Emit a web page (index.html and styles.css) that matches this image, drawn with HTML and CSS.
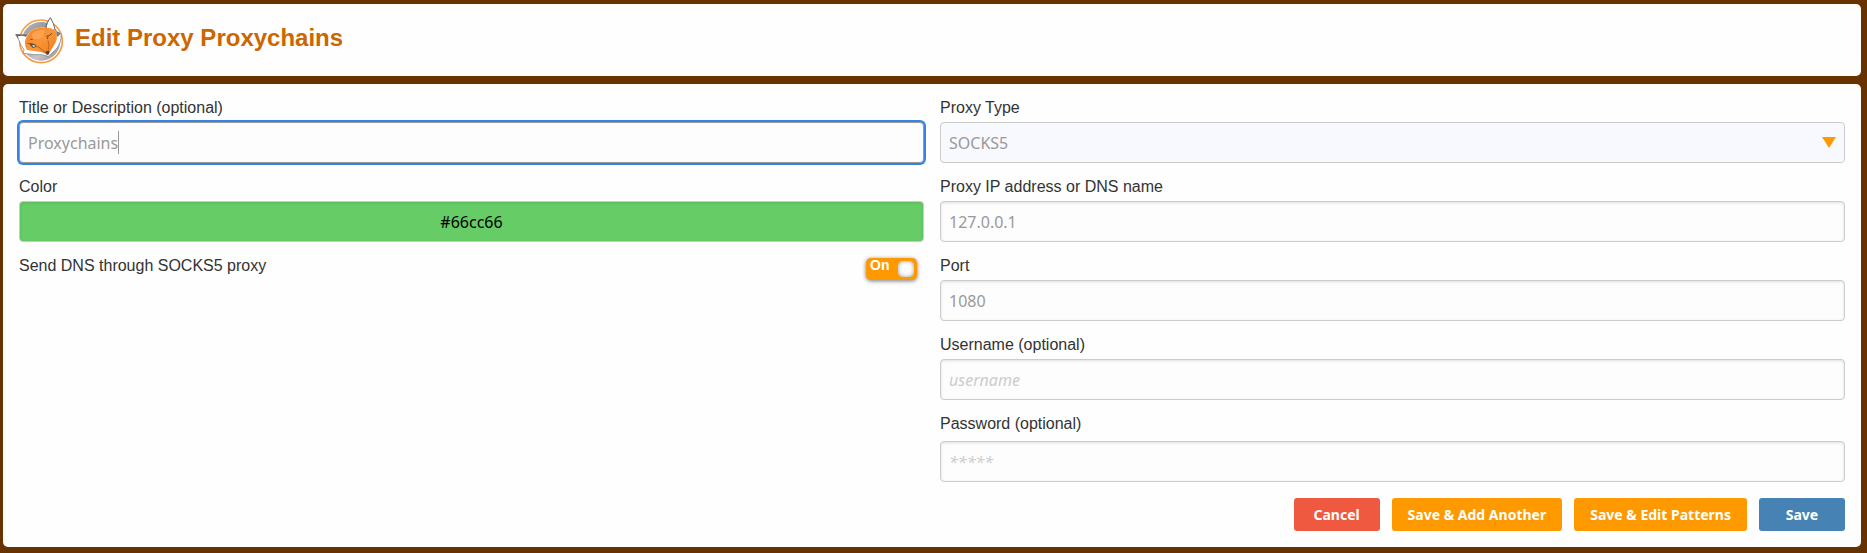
FILE: index.html
```html
<!DOCTYPE html>
<html lang="en">
<head>
<meta charset="utf-8">
<title>Edit Proxy Proxychains</title>
<link rel="stylesheet" href="styles.css">
</head>
<body>
<header class="card header">
  <svg class="logo" viewBox="12 12 150 150" aria-hidden="true">
    <defs>
      <linearGradient id="disc" x1="0" y1="0" x2="1" y2="1">
        <stop offset="0" stop-color="#b4b5b7"/><stop offset=".35" stop-color="#9b9c9f"/>
        <stop offset=".65" stop-color="#c5c6c8"/><stop offset="1" stop-color="#87888b"/>
      </linearGradient>
      <linearGradient id="fur" x1="0" y1="0" x2="1" y2="1">
        <stop offset="0" stop-color="#f58220"/><stop offset=".5" stop-color="#fa9537"/><stop offset="1" stop-color="#f07c1c"/>
      </linearGradient>
    </defs>
    <circle cx="93" cy="91" r="64" fill="#fff" stroke="#f99b45" stroke-width="5"/>
    <circle cx="93" cy="91" r="58" fill="url(#disc)"/>
    <path d="M17 71 L52 73 L62 60 Q82 47 107 50 Q110 33 121 20 Q132 36 136 59 L153 66 Q156 92 139 114 L115 136 Q94 128 74 131 L39 127 L42 116 Q31 102 28 90Z" fill="#fff"/>
    <path d="M17 71 L28 90 Q31 102 42 116 L39 127 L74 131 Q94 128 115 136 L139 114 Q156 92 153 66" fill="none" stroke="#77787b" stroke-width="2" stroke-linejoin="round"/>
    <path d="M16 69 L52 71 L48 77 Q34 72 24 76 L26 85Z" fill="#626366"/>
    <path d="M107 50 Q110 33 121 20 Q132 36 136 59" fill="none" stroke="#626366" stroke-width="3"/>
    <path d="M107 51 Q110 35 120 23 L112 38 L110 50Z" fill="#626366"/>
    <path d="M50 77 L62 60 Q84 47 110 50 Q128 51 138 59 Q146 83 131 104 L118 126 L109 130 Q95 121 78 121 L51 117 Q39 96 50 77Z" fill="url(#fur)"/>
    <path d="M65 70 Q79 55 104 57 L99 78 Q83 89 68 82Z" fill="#ffb066" opacity=".6"/>
    <path d="M138 60 L153 66 Q146 76 142 77Z" fill="#77787b"/>
    <path d="M51 97 Q66 96 73 101 Q90 109 109 127" fill="none" stroke="#8a4c20" stroke-width="2"/>
    <path d="M57 96 L76 100 L78 108 L68 111 L61 103Z" fill="#59504b"/>
    <path d="M67 102 L74 103 L74 107 L69 107Z" fill="#e6f0f4"/>
    <path d="M108 76 Q118 76 126 67 M114 77 L112 84 M61 85 L68 85" fill="none" stroke="#6b4a33" stroke-width="3"/>
    <path d="M114 88 Q119 103 114 121" fill="none" stroke="#a75b23" stroke-width="2"/>
    <path d="M107 121 L118 120 L117 130 L110 132Z" fill="#424245"/>
  </svg>
  <h1 class="title">Edit Proxy Proxychains</h1>
</header>

<form class="card panel">
  <div class="columns">
    <div class="column">
      <div class="field">
        <label class="label" for="title">Title or Description (optional)</label>
        <div class="editing">
          <input class="control active" id="title" type="text" value="Proxychains">
          <span class="caret"></span>
        </div>
      </div>
      <div class="field">
        <label class="label" for="color">Color</label>
        <input class="control color" id="color" type="text" value="#66cc66">
      </div>
      <div class="switch-row">
        <label class="label" for="dns">Send DNS through SOCKS5 proxy</label>
        <span class="switch">
          <input class="switch-input" id="dns" type="checkbox" checked>
          <span class="switch-text">On</span>
        </span>
      </div>
    </div>
    <div class="column">
      <div class="field">
        <label class="label" for="type">Proxy Type</label>
        <div class="select">
          <select class="control select-control" id="type"><option>SOCKS5</option></select>
          <svg class="arrow" viewBox="0 0 14 11" aria-hidden="true"><path d="M0 0H14L7 11Z" fill="#f90"/></svg>
        </div>
      </div>
      <div class="field">
        <label class="label" for="address">Proxy IP address or DNS name</label>
        <input class="control" id="address" type="text" value="127.0.0.1">
      </div>
      <div class="field">
        <label class="label" for="port">Port</label>
        <input class="control" id="port" type="text" value="1080">
      </div>
      <div class="field">
        <label class="label" for="username">Username (optional)</label>
        <input class="control" id="username" type="text" placeholder="username">
      </div>
      <div class="field password">
        <label class="label" for="password">Password (optional)</label>
        <input class="control" id="password" type="password" placeholder="*****">
      </div>
    </div>
  </div>
  <div class="actions">
    <button class="button cancel" type="button">Cancel</button>
    <button class="button" type="button">Save &amp; Add Another</button>
    <button class="button" type="button">Save &amp; Edit Patterns</button>
    <button class="button save" type="button">Save</button>
  </div>
</form>
</body>
</html>
```

FILE: styles.css
```css
* {
  box-sizing: border-box;
}

body {
  margin: 4px 6px 6px 3px;
  background: #630;
  color: #333;
  font: 16px/16px "Liberation Sans", Arial, sans-serif;
}

.card {
  background: #fefefe;
  border-radius: 5px;
}

.header {
  display: flex;
  align-items: center;
  gap: 11px;
  padding: 11px;
  margin-bottom: 8px;
}

.logo {
  width: 50px;
  height: 50px;
}

.title {
  margin: 0 0 5px;
  color: #c60;
  font-size: 24px;
  line-height: 24px;
}

.panel {
  padding: 16px;
}

.columns {
  display: grid;
  grid-template-columns: 1fr 1fr;
  gap: 16px;
}

.column {
  display: flex;
  flex-direction: column;
  gap: 16px;
}

.field {
  display: flex;
  flex-direction: column;
  gap: 6px;
}

.password {
  gap: 9px;
}

.control {
  display: block;
  width: 100%;
  height: 41px;
  margin: 0;
  padding: 0 8px;
  border: 1px solid #ccc;
  border-radius: 4px;
  background: #fdfdfd;
  box-shadow: inset 0 1px 3px rgba(0, 0, 0, 0.12);
  color: #999;
  font: 16px "Noto Sans", sans-serif;
}

.control::placeholder {
  color: #ccc;
  font-style: italic;
}

.editing,
.select,
.switch {
  position: relative;
}

.active {
  border-color: #999;
  box-shadow: 0 0 0 2px #3584e4;
}

.caret {
  position: absolute;
  top: 9px;
  left: 99px;
  width: 1px;
  height: 23px;
  background: #999;
}

.color {
  background: #6c6;
  color: #000;
  text-align: center;
}

.select-control {
  appearance: none;
  background: #f8f8ff;
  box-shadow: none;
}

.arrow {
  position: absolute;
  top: 15px;
  right: 9px;
  width: 14px;
  height: 11px;
  pointer-events: none;
}

.switch-row {
  display: flex;
  justify-content: space-between;
  padding-right: 7px;
}

.switch {
  width: 51px;
  height: 22px;
}

.switch-input {
  display: flex;
  justify-content: flex-end;
  appearance: none;
  width: 100%;
  height: 100%;
  margin: 0;
  padding: 3px;
  border-radius: 5px;
  background: #f90;
  box-shadow: 0 1px 4px #777;
}

.switch-input::before {
  content: "";
  width: 16px;
  height: 16px;
  border-radius: 5px;
  background: #fff;
  box-shadow: inset 0 0 4px #999;
}

.switch-text {
  position: absolute;
  top: 0;
  left: 4px;
  color: #fff;
  font-size: 14px;
  font-weight: bold;
  line-height: 14px;
  pointer-events: none;
}

.actions {
  display: flex;
  justify-content: flex-end;
  gap: 12px;
  margin-top: 16px;
}

.button {
  min-width: 86px;
  height: 33px;
  padding: 0 16px;
  border: 0;
  border-radius: 3px;
  background: #f90;
  color: #fff;
  font: bold 14px "Noto Sans", sans-serif;
}

.cancel {
  background: #ee5940;
}

.save {
  background: #4682b4;
}
```
